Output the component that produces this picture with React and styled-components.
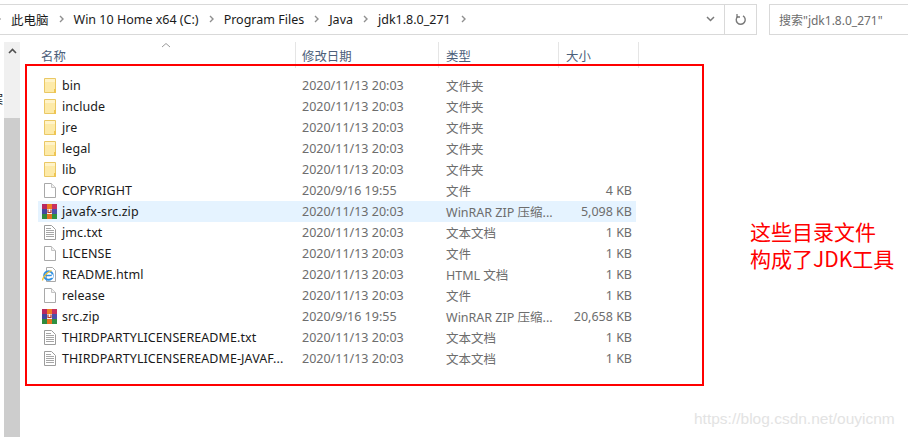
import React from 'react';
import styled, { createGlobalStyle } from 'styled-components';

const GlobalStyle = createGlobalStyle`
  html, body { margin: 0; padding: 0; background: #fff; }
  body { font-family: "Noto Sans", "Noto Sans CJK SC", sans-serif; overflow: hidden; }
`;

const Page = styled.div`
  position: relative;
  width: 908px;
  height: 437px;
  overflow: hidden;
  background: #fff;
`;

// --- toolbar ---
const Toolbar = styled.div`
  display: flex;
  align-items: stretch;
  height: 31px;
  padding-top: 4px;
`;

const AddressBar = styled.div`
  display: flex;
  align-items: center;
  width: 757px;
  box-sizing: border-box;
  border: 1px solid #d9d9d9;
  border-left: none;
  padding-bottom: 1px;
`;

const Crumbs = styled.div`
  display: flex;
  align-items: center;
  flex: 1;
  gap: 10px;
  margin-left: -4px;
  font-size: 12.5px;
  color: #1a1a1a;
`;

const Crumb = styled.span`
  white-space: nowrap;
`;

const Chevron = styled.svg`
  width: 5px;
  height: 8px;
  flex: none;
`;

const Dropdown = styled.div`
  display: flex;
  align-items: center;
  justify-content: center;
  width: 28px;
`;

const Refresh = styled.div`
  display: flex;
  align-items: center;
  justify-content: center;
  width: 31px;
  align-self: stretch;
  border-left: 1px solid #d9d9d9;
  margin: -1px 0 -2px;
`;

const SearchBox = styled.div`
  display: flex;
  align-items: center;
  margin-left: 12px;
  flex: 1;
  box-sizing: border-box;
  border: 1px solid #d9d9d9;
  border-right: none;
  padding-left: 9px;
  font-size: 12px;
  color: #6d6d6d;
  white-space: nowrap;
`;

// --- body ---
const Main = styled.div`
  display: flex;
  height: 402px;
`;

const Edge = styled.div`
  width: 4px;
  overflow: hidden;
  flex: none;
  padding-top: 57px;
  font-size: 12px;
  line-height: 16px;
  color: #1a1a1a;
`;

const EdgeGlyph = styled.div`
  margin-left: -9px;
  width: 14px;
`;

const Scrollbar = styled.div`
  display: flex;
  flex-direction: column;
  width: 16px;
  margin-top: 7px;
  background: #f0f0f0;
  flex: none;
`;

const ScrollUp = styled.div`
  display: flex;
  align-items: center;
  justify-content: center;
  height: 18px;
`;

const ScrollGap = styled.div`
  height: 58px;
`;

const ScrollThumb = styled.div`
  flex: 1;
  background: #cdcdcd;
`;

const Files = styled.div`
  flex: 1;
  margin-left: 18px;
  margin-top: 7px;
`;

const Header = styled.div`
  position: relative;
  display: grid;
  grid-template-columns: 258px 143px 120px 80px;
  height: 26px;
  font-size: 12.4px;
  color: #4c607a;
`;

const HeaderCell = styled.div`
  display: flex;
  align-items: center;
  padding-left: ${p => p.$pad || 6}px;
  padding-top: 2px;
  box-sizing: border-box;
  border-right: 1px solid #e5e5e5;
`;

const SortArrow = styled.svg`
  position: absolute;
  left: 123px;
  top: 0;
  width: 10px;
  height: 6px;
`;

const Rows = styled.div`
  display: flex;
  flex-direction: column;
  margin-top: 7px;
`;

const Row = styled.div`
  display: grid;
  grid-template-columns: 258px 144px 120px 72px;
  align-items: center;
  height: 21px;
  width: 598px;
  font-size: 12.5px;
  color: #6d6d6d;
  background: ${p => (p.$selected ? '#e5f3ff' : 'transparent')};
`;

const NameCell = styled.div`
  display: flex;
  align-items: center;
  gap: 4px;
  padding-left: 3px;
  color: #1a1a1a;
  white-space: nowrap;
  overflow: hidden;
`;

const NameText = styled.span`
  letter-spacing: 0.08px;
`;

const IconWrap = styled.svg`
  width: 17px;
  height: 17px;
  flex: none;
`;

const Cell = styled.div`
  white-space: nowrap;
  padding-left: 6px;
`;

const SizeCell = styled.div`
  text-align: right;
  white-space: nowrap;
`;

// --- annotations ---
const RedBox = styled.div`
  position: absolute;
  left: 25px;
  top: 64px;
  width: 679px;
  height: 322px;
  box-sizing: border-box;
  border: 2px solid #ff0000;
`;

const Note = styled.div`
  position: absolute;
  left: 750px;
  top: 218px;
  font-size: 21px;
  line-height: 27px;
  color: #ff0000;
  font-family: "Noto Sans CJK SC", "Noto Sans", sans-serif;
  white-space: nowrap;
`;

const Watermark = styled.div`
  position: absolute;
  left: 694px;
  top: 410px;
  font-family: "Liberation Sans", sans-serif;
  font-size: 15.5px;
  line-height: 18px;
  color: #e3e3e3;
  white-space: nowrap;
`;

const Sep = () => (
  <Chevron viewBox="0 0 5 8">
    <path d="M1 1l3 3-3 3" fill="none" stroke="#8f8f8f" strokeWidth="1.4" />
  </Chevron>
);

const FolderIcon = () => (
  <IconWrap viewBox="0 0 17 17">
    <path d="M3.500 1.500h11v14h-11z" fill="#fdeaa8" stroke="#eac864" />
    <rect x="4" y="2" width="10" height="3" fill="#fff3c8" />
    <rect x="13" y="12" width="2" height="4" fill="#efc552" />
  </IconWrap>
);

const FileIcon = () => (
  <IconWrap viewBox="0 0 17 17">
    <path d="M3.500 1.500h7l4 4v10h-11z" fill="#fff" stroke="#a9a9a9" />
    <path d="M10.500 1.500v4h4" fill="#f1f1f1" stroke="#c4c4c4" />
  </IconWrap>
);

const TextIcon = () => (
  <IconWrap viewBox="0 0 17 17">
    <path d="M3.500 1.500h7l4 4v10h-11z" fill="#fff" stroke="#9c9c9c" />
    <path d="M5 4.500h5M5 6.500h8M5 8.500h8M5 10.500h8M5 12.500h8" stroke="#a6a6a6" />
  </IconWrap>
);

const RarIcon = () => (
  <IconWrap viewBox="0 0 17 17">
    <rect x="1" y="1" width="5" height="5" fill="#b9285f" />
    <rect x="6" y="1" width="5" height="5" fill="#ee7d22" />
    <rect x="11" y="1" width="5" height="5" fill="#c7305f" />
    <rect x="1" y="6" width="5" height="5" fill="#44479f" />
    <rect x="6" y="6" width="5" height="5" fill="#f5f1ee" />
    <rect x="11" y="6" width="5" height="5" fill="#4c50aa" />
    <rect x="1" y="11" width="5" height="5" fill="#2f8a3d" />
    <rect x="6" y="11" width="5" height="5" fill="#e8701f" />
    <rect x="11" y="11" width="5" height="5" fill="#2f9142" />
    <path d="M7 6.500v3h3v-3" fill="none" stroke="#b5342c" strokeWidth="1.200" />
  </IconWrap>
);

const HtmlIcon = () => (
  <IconWrap viewBox="0 0 17 17">
    <path d="M5.500 1.500h6l3 3v11h-9z" fill="#fff" stroke="#a9a9a9" />
    <circle cx="7.500" cy="9.500" r="4.300" fill="none" stroke="#2f8fe0" strokeWidth="2" />
    <path d="M4 9.500h7" stroke="#2f8fe0" strokeWidth="1.500" />
    <path d="M11.500 8.500v2.500h-2" fill="none" stroke="#fff" strokeWidth="1.500" />
    <path d="M1.500 14.500c0-3 4-8 9-10" fill="none" stroke="#f2c230" strokeWidth="1.300" />
  </IconWrap>
);

const icons = { folder: FolderIcon, file: FileIcon, text: TextIcon, rar: RarIcon, html: HtmlIcon };

const files = [
  { name: 'bin', date: '2020/11/13 20:03', type: '文件夹', size: '', icon: 'folder' },
  { name: 'include', date: '2020/11/13 20:03', type: '文件夹', size: '', icon: 'folder' },
  { name: 'jre', date: '2020/11/13 20:03', type: '文件夹', size: '', icon: 'folder' },
  { name: 'legal', date: '2020/11/13 20:03', type: '文件夹', size: '', icon: 'folder' },
  { name: 'lib', date: '2020/11/13 20:03', type: '文件夹', size: '', icon: 'folder' },
  { name: 'COPYRIGHT', date: '2020/9/16 19:55', type: '文件', size: '4 KB', icon: 'file' },
  { name: 'javafx-src.zip', date: '2020/11/13 20:03', type: 'WinRAR ZIP 压缩...', size: '5,098 KB', icon: 'rar', selected: true },
  { name: 'jmc.txt', date: '2020/11/13 20:03', type: '文本文档', size: '1 KB', icon: 'text' },
  { name: 'LICENSE', date: '2020/11/13 20:03', type: '文件', size: '1 KB', icon: 'file' },
  { name: 'README.html', date: '2020/11/13 20:03', type: 'HTML 文档', size: '1 KB', icon: 'html' },
  { name: 'release', date: '2020/11/13 20:03', type: '文件', size: '1 KB', icon: 'file' },
  { name: 'src.zip', date: '2020/9/16 19:55', type: 'WinRAR ZIP 压缩...', size: '20,658 KB', icon: 'rar' },
  { name: 'THIRDPARTYLICENSEREADME.txt', date: '2020/11/13 20:03', type: '文本文档', size: '1 KB', icon: 'text' },
  { name: 'THIRDPARTYLICENSEREADME-JAVAF...', date: '2020/11/13 20:03', type: '文本文档', size: '1 KB', icon: 'text' },
];

const crumbs = ['此电脑', 'Win 10 Home x64 (C:)', 'Program Files', 'Java', 'jdk1.8.0_271'];

const App = () => {
  return (
    <Page>
      <GlobalStyle />
      <Toolbar>
        <AddressBar>
          <Crumbs>
            <Sep />
            {crumbs.map(c => (
              <React.Fragment key={c}>
                <Crumb>{c}</Crumb>
                <Sep />
              </React.Fragment>
            ))}
          </Crumbs>
          <Dropdown>
            <svg width="9" height="6" viewBox="0 0 9 6">
              <path d="M1 1l3.500 3.500L8 1" fill="none" stroke="#7a7a7a" strokeWidth="1.500" />
            </svg>
          </Dropdown>
          <Refresh>
            <svg width="12" height="13" viewBox="0 0 12 13">
              <path d="M3 3.200a4.500 4.500 0 1 0 5-.3" fill="none" stroke="#7a7a7a" strokeWidth="1.400" />
              <path d="M2 1v3h3" fill="none" stroke="#7a7a7a" strokeWidth="1.300" />
            </svg>
          </Refresh>
        </AddressBar>
        <SearchBox>搜索"jdk1.8.0_271"</SearchBox>
      </Toolbar>
      <Main>
        <Edge>
          <EdgeGlyph>案</EdgeGlyph>
        </Edge>
        <Scrollbar>
          <ScrollUp>
            <svg width="9" height="6" viewBox="0 0 9 6">
              <path d="M1 5l3.500-3.500L8 5" fill="none" stroke="#505050" strokeWidth="1.600" />
            </svg>
          </ScrollUp>
          <ScrollGap />
          <ScrollThumb />
        </Scrollbar>
        <Files>
          <Header>
            <HeaderCell $pad={3}>名称</HeaderCell>
            <HeaderCell>修改日期</HeaderCell>
            <HeaderCell $pad={7}>类型</HeaderCell>
            <HeaderCell $pad={7}>大小</HeaderCell>
            <SortArrow viewBox="0 0 10 6">
              <path d="M1 5l4-3.500L9 5" fill="none" stroke="#9a9a9a" />
            </SortArrow>
          </Header>
          <Rows>
            {files.map(f => {
              const Icon = icons[f.icon];
              return (
                <Row key={f.name} $selected={f.selected}>
                  <NameCell>
                    <Icon />
                    <NameText>{f.name}</NameText>
                  </NameCell>
                  <Cell>{f.date}</Cell>
                  <Cell>{f.type}</Cell>
                  <SizeCell>{f.size}</SizeCell>
                </Row>
              );
            })}
          </Rows>
        </Files>
      </Main>
      <RedBox />
      <Note>
        这些目录文件
        <br />
        构成了JDK工具
      </Note>
      <Watermark>https://blog.csdn.net/ouyicnm</Watermark>
    </Page>
  );
};

export default App;
